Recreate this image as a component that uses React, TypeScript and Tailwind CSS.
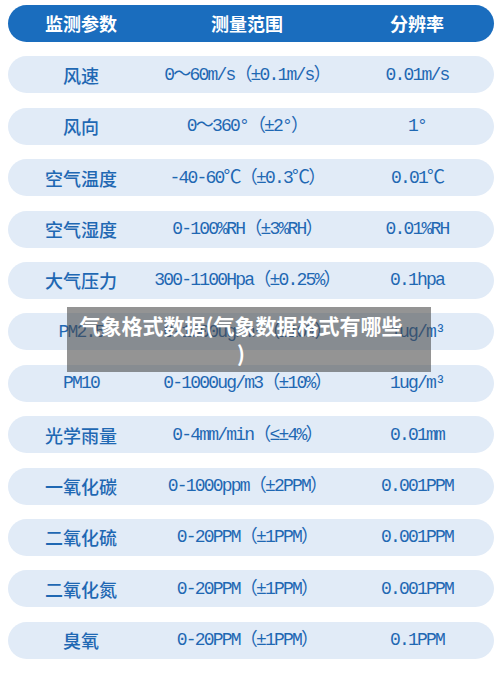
import React from 'react';

type Row = { name: string; range: string; res: string };

const rows: Row[] = [
    { name: '风速', range: '0～60m/s（±0.1m/s）', res: '0.01m/s' },
    { name: '风向', range: '0～360°（±2°）', res: '1°' },
    { name: '空气温度', range: '-40-60℃（±0.3℃）', res: '0.01℃' },
    { name: '空气湿度', range: '0-100%RH（±3%RH）', res: '0.01%RH' },
    { name: '大气压力', range: '300-1100Hpa（±0.25%）', res: '0.1hpa' },
    { name: 'PM2.5', range: '0-1000ug/m³（±10%）', res: '1ug/m³' },
    { name: 'PM10', range: '0-1000ug/m3（±10%）', res: '1ug/m³' },
    { name: '光学雨量', range: '0-4mm/min（≤±4%）', res: '0.01mm' },
    { name: '一氧化碳', range: '0-1000ppm（±2PPM）', res: '0.001PPM' },
    { name: '二氧化硫', range: '0-20PPM（±1PPM）', res: '0.001PPM' },
    { name: '二氧化氮', range: '0-20PPM（±1PPM）', res: '0.001PPM' },
    { name: '臭氧', range: '0-20PPM（±1PPM）', res: '0.1PPM' },
];

const cjk = "font-['Noto_Sans_CJK_SC',sans-serif]";
const mono = "font-['Liberation_Mono','Noto_Sans_CJK_SC',monospace] tracking-[-1.8px]";

export default function App() {
    return (
        <div className="relative w-[500px] h-[679px] bg-white overflow-hidden">
            <div className="flex flex-col gap-[14.4px] pl-[8px] pr-[6px] pt-[5px]">
                {/* Header */}
                <div className={`grid grid-cols-[146px_186px_154px] h-[37px] items-center rounded-full bg-[#1a6dbe] text-white text-[18px] font-semibold ${cjk}`}>
                    <div className="text-center">监测参数</div>
                    <div className="text-center">测量范围</div>
                    <div className="text-center">分辨率</div>
                </div>

                {rows.map((r) => {
                    const latin = /^[A-Z]/.test(r.name);
                    return (
                        <div
                            key={r.name}
                            className="grid grid-cols-[146px_186px_154px] h-[37px] items-center rounded-full bg-[#e1ebf7] text-[#1f68b3] text-[18px] leading-none"
                        >
                            <div className={`text-center ${latin ? mono : cjk + ' font-medium'}`}>{r.name}</div>
                            <div className={`text-center whitespace-nowrap ${mono}`}>{r.range}</div>
                            <div className={`text-center whitespace-nowrap ${mono}`}>{r.res}</div>
                        </div>
                    );
                })}
            </div>

            {/* Title overlay */}
            <div className="absolute left-[67px] top-[307px] w-[364px] h-[65px] bg-[rgba(70,70,70,0.58)] pl-[10px] pr-[26px] pt-[4px]">
                <div className={`text-center text-white text-[21px] leading-[28px] font-bold whitespace-nowrap ${cjk}`}>
                    气象格式数据(气象数据格式有哪些
                    <br />)
                </div>
            </div>
        </div>
    );
}
